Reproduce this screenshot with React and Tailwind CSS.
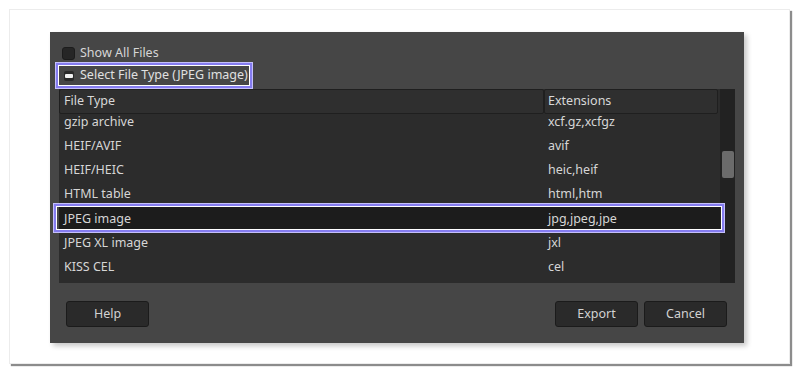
import React from 'react';

const rows = [
  { name: 'gzip archive', ext: 'xcf.gz,xcfgz', first: true },
  { name: 'HEIF/AVIF', ext: 'avif' },
  { name: 'HEIF/HEIC', ext: 'heic,heif' },
  { name: 'HTML table', ext: 'html,htm' },
  { name: 'JPEG image', ext: 'jpg,jpeg,jpe', selected: true },
  { name: 'JPEG XL image', ext: 'jxl' },
  { name: 'KISS CEL', ext: 'cel' },
];

const font = { fontFamily: '"Noto Sans", "Open Sans", Arial, sans-serif' };

const DialogButton = ({ label }) => (
  <button className="w-[83px] h-[26px] rounded-[3px] bg-[#2a2a2a] border border-[#1b1b1b] text-[12.5px] text-[#d2d2d2] flex items-center justify-center">
    {label}
  </button>
);

export default function App() {
  return (
    <div className="w-[800px] h-[375px] bg-white pt-[9px] pl-[9px]" style={font}>
      {/* Outer card */}
      <div className="w-[781px] h-[355px] bg-white border border-[#ececec] shadow-[2px_2px_1px_rgba(0,0,0,0.45)] pl-[40px] pt-[22px]">
        {/* Dark dialog */}
        <div className="w-[694px] h-[311px] bg-[#464646] shadow-[3px_3px_5px_rgba(0,0,0,0.22)] flex flex-col px-[9px] pt-[11px]">
          {/* Show all files */}
          <div className="h-[20px] flex items-center gap-[5px] pl-[3px]">
            <div className="w-[13px] h-[13px] rounded-[3px] bg-[#262626] border border-[#1c1c1c]" />
            <span className="text-[12.5px] text-[#d6d6d6]">Show All Files</span>
          </div>

          {/* Select file type expander */}
          <div className="h-[25px] w-[196px] -ml-[3px] flex items-center gap-[6px] pl-[6px] border-2 border-[#857cf0] shadow-[inset_0_0_0_1px_#ffffff,0_0_0_1px_#c4bffb]">
            <div className="w-[10px] h-[10px] rounded-[2px] bg-[#2a2a2a] flex items-center justify-center">
              <div className="w-[8px] h-[4px] rounded-[1px] bg-[#f2f2f2]" />
            </div>
            <span className="text-[12.5px] text-[#e0e0e0] whitespace-nowrap">Select File Type (JPEG image)</span>
          </div>

          {/* Table */}
          <div className="mt-[1px] w-[676px] h-[194px] bg-[#2c2c2c] flex">
            <div className="flex-1 flex flex-col">
              {/* Header */}
              <div className="h-[25px] flex">
                <div className="w-[485px] h-full bg-[#2f2f2f] border border-[#1f1f1f] rounded-[2px] flex items-center pl-[4px] text-[12.5px] text-[#d8d8d8]">
                  File Type
                </div>
                <div className="w-[174px] h-full bg-[#2f2f2f] border border-[#1f1f1f] rounded-[2px] flex items-center pl-[3px] text-[12.5px] text-[#d8d8d8]">
                  Extensions
                </div>
              </div>
              {/* Body */}
              {rows.map((r) => (
                <div
                  key={r.name}
                  className={`relative flex text-[12.5px] text-[#d6d6d6] ${r.first ? 'h-[20px] items-start leading-[16px]' : 'h-[24.3px] items-center'} ${r.selected ? 'bg-[#1c1c1c]' : ''}`}
                >
                  <span className="w-[489px] pl-[5px] whitespace-nowrap">{r.name}</span>
                  <span className="whitespace-nowrap">{r.ext}</span>
                  {r.selected && (
                    <div className="absolute -left-[5px] -right-[4px] -top-[3px] -bottom-[1px] border-2 border-[#857cf0] shadow-[inset_0_0_0_1px_#ffffff,0_0_0_1px_#c4bffb] pointer-events-none" />
                  )}
                </div>
              ))}
            </div>
            {/* Scrollbar */}
            <div className="w-[15px] h-full bg-[#222222] pt-[62px] flex justify-center">
              <div className="w-[12px] h-[27px] rounded-[2px] bg-[#6b6b6b]" />
            </div>
          </div>

          {/* Buttons */}
          <div className="mt-[18px] flex items-center pl-[7px] pr-[8px]">
            <DialogButton label="Help" />
            <div className="flex-1" />
            <div className="flex gap-[6px]">
              <DialogButton label="Export" />
              <DialogButton label="Cancel" />
            </div>
          </div>
        </div>
      </div>
    </div>
  );
}
